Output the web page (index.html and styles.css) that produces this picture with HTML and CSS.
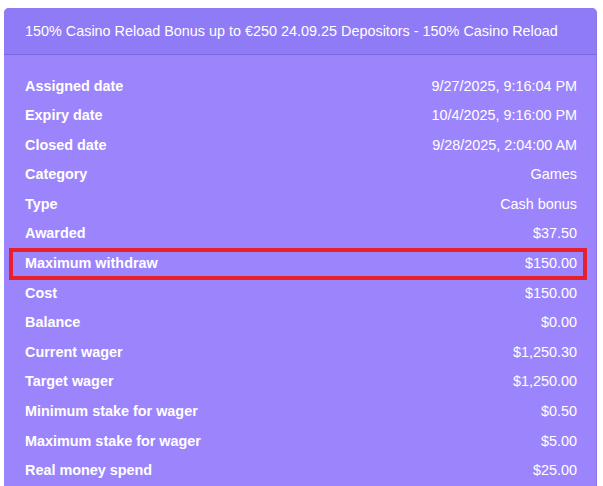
FILE: index.html
```html
<!DOCTYPE html>
<html>
<head>
<meta charset="utf-8">
<link rel="stylesheet" href="styles.css">
</head>
<body>
<div class="card">
  <div class="card-header">150% Casino Reload Bonus up to €250 24.09.25 Depositors - 150% Casino Reload</div>
  <div class="card-body">
    <div class="row"><span class="label">Assigned date</span><span class="value">9/27/2025, 9:16:04 PM</span></div>
    <div class="row"><span class="label">Expiry date</span><span class="value">10/4/2025, 9:16:00 PM</span></div>
    <div class="row"><span class="label">Closed date</span><span class="value">9/28/2025, 2:04:00 AM</span></div>
    <div class="row"><span class="label">Category</span><span class="value">Games</span></div>
    <div class="row"><span class="label">Type</span><span class="value">Cash bonus</span></div>
    <div class="row"><span class="label">Awarded</span><span class="value">$37.50</span></div>
    <div class="row highlight"><span class="label">Maximum withdraw</span><span class="value">$150.00</span></div>
    <div class="row"><span class="label">Cost</span><span class="value">$150.00</span></div>
    <div class="row"><span class="label">Balance</span><span class="value">$0.00</span></div>
    <div class="row"><span class="label">Current wager</span><span class="value">$1,250.30</span></div>
    <div class="row"><span class="label">Target wager</span><span class="value">$1,250.00</span></div>
    <div class="row"><span class="label">Minimum stake for wager</span><span class="value">$0.50</span></div>
    <div class="row"><span class="label">Maximum stake for wager</span><span class="value">$5.00</span></div>
    <div class="row"><span class="label">Real money spend</span><span class="value">$25.00</span></div>
  </div>
</div>
</body>
</html>
```
FILE: styles.css
```css
html, body {
  margin: 0;
  padding: 0;
  background: #ffffff;
}
body {
  padding: 8px 6px 0 4px;
  font-family: "Liberation Sans", Arial, sans-serif;
  color: #ffffff;
}
.card {
  background: #9c85fc;
  border-radius: 5px;
  border-right: 1px solid #8a74ea;
}
.card-header {
  background: #8f7bf5;
  border-radius: 5px 5px 0 0;
  border-bottom: 1px solid #7c68de;
  padding: 12px 21px;
  font-size: 14.4px;
  line-height: 22px;
  white-space: nowrap;
}
.card-body {
  padding: 16.5px 19px 10px 21px;
}
.row {
  display: flex;
  justify-content: space-between;
  align-items: center;
  padding: 5px 0;
  line-height: 19.6px;
  font-size: 14.4px;
  position: relative;
}
.label {
  font-weight: bold;
}
.highlight::after {
  content: "";
  position: absolute;
  top: -1px;
  bottom: -1px;
  left: -16px;
  right: -10px;
  border: 4px solid #e8202b;
}
```
